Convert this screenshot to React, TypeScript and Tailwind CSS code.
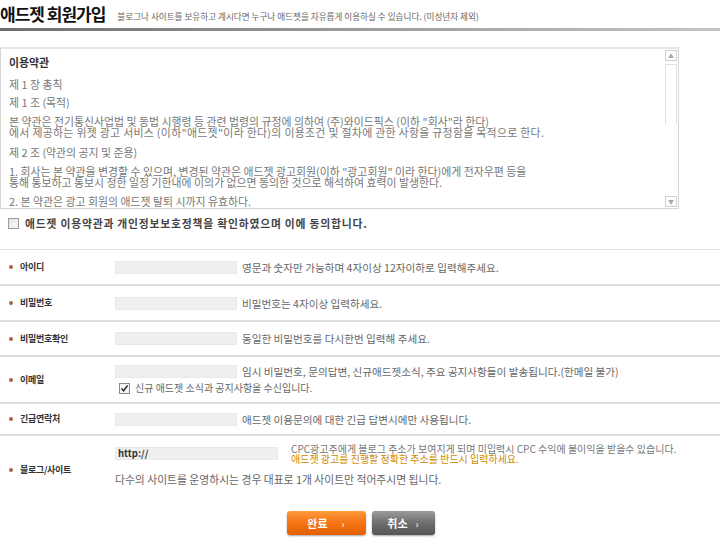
import React from "react";

const Dot = () => <span className="w-[4px] h-[4px] rounded-full bg-[#a8643e] shrink-0" />;

function Row({ label, h, children }: { label: string; h: string; children: React.ReactNode }) {
  return (
    <div className={`flex ${h} border-b-2 border-[#dcdcdc] items-center`}>
      <div className="w-[115px] shrink-0 flex items-center pl-[9px] gap-[7px] self-center">
        <Dot />
        <span className="text-[9px] font-bold text-[#333] tracking-[-0.3px]">{label}</span>
      </div>
      <div className="flex-1">{children}</div>
    </div>
  );
}

const Input = ({ w = "w-[122px]", children }: { w?: string; children?: React.ReactNode }) => (
  <div className={`${w} h-[13px] bg-[#efefef] border border-[#e9e9e9] shrink-0 flex items-center pl-[2px]`}>{children}</div>
);

const Help = ({ children }: { children: React.ReactNode }) => (
  <span className="ml-[5px] text-[10.6px] text-[#666] leading-[13px] whitespace-nowrap">{children}</span>
);

export default function App() {
  return (
    <div className="w-[720px] h-[541px] bg-white overflow-hidden font-['Noto_Sans_CJK_KR',sans-serif] text-[#555]">
      {/* header */}
      <div className="flex items-end h-[28px] pb-[3px]">
        <h1 className="text-[17px] font-bold leading-[22px] tracking-[-1px] text-[#111] whitespace-nowrap">애드젯 회원가입</h1>
        <span className="ml-[12px] mb-[4px] text-[8.6px] text-[#666] leading-[10px] whitespace-nowrap">
          블로그나 사이트를 보유하고 계시다면 누구나 애드젯을 자유롭게 이용하실 수 있습니다. (미성년자 제외)
        </span>
      </div>
      <div className="h-[3px] bg-gradient-to-r from-[#6e6e6e] via-[#9c9c9c] to-[#c4c4c4]" />

      {/* terms box */}
      <div className="mt-[16px] w-[679px] h-[162px] border border-[#d6d6d6] border-t-2 border-t-[#e6e6e6] flex overflow-hidden">
        <div className="flex-1 pl-[8px] pt-[8px] text-[10.9px] leading-[11px] text-[#777] whitespace-nowrap overflow-hidden">
          <p className="font-bold text-[#333] mb-[11px]">이용약관</p>
          <p className="mb-[7px]">제 1 장 총칙</p>
          <p className="mb-[8px]">제 1 조 (목적)</p>
          <p>본 약관은 전기통신사업법 및 동법 시행령 등 관련 법령의 규정에 의하여 (주)와이드픽스 (이하 "회사"라 한다)</p>
          <p className="mb-[9px] tracking-[0.3px]">에서 제공하는 위젯 광고 서비스 (이하"애드젯"이라 한다)의 이용조건 및 절차에 관한 사항을 규정함을 목적으로 한다.</p>
          <p className="mb-[8px]">제 2 조 (약관의 공지 및 준용)</p>
          <p>1. 회사는 본 약관을 변경할 수 있으며, 변경된 약관은 애드젯 광고회원(이하 "광고회원" 이라 한다)에게 전자우편 등을</p>
          <p className="mb-[8px]">통해 통보하고 통보시 정한 일정 기한내에 이의가 없으면 동의한 것으로 해석하여 효력이 발생한다.</p>
          <p>2. 본 약관은 광고 회원의 애드젯 탈퇴 시까지 유효하다.</p>
        </div>
        <div className="w-[13px] shrink-0 flex flex-col pt-[1px] pb-[1px] pr-[1px]">
          <div className="h-[11px] border border-[#cfcfcf] flex items-center justify-center text-[6px] text-[#aaa] leading-none">▲</div>
          <div className="mt-[3px] h-[60px] border border-[#e0e0e0] border-b-0" />
          <div className="flex-1" />
          <div className="h-[11px] border border-[#cfcfcf] flex items-center justify-center text-[6px] text-[#aaa] leading-none">▼</div>
        </div>
      </div>

      {/* agreement */}
      <div className="mt-[8px] flex items-center h-[12px] pl-[8px]">
        <span className="w-[11px] h-[11px] border border-[#9a9a9a] bg-gradient-to-br from-[#e6e6e6] to-[#fafafa] shrink-0" />
        <span className="ml-[6px] text-[10.8px] font-bold text-[#444] tracking-[0.8px] whitespace-nowrap leading-[12px]">
          애드젯 이용약관과 개인정보보호정책을 확인하였으며 이에 동의합니다.
        </span>
      </div>

      {/* form */}
      <div className="mt-[20px] border-t border-[#e4e4e4]">
        <Row label="아이디" h="h-[36px]">
          <div className="flex items-center"><Input /><Help>영문과 숫자만 가능하며 4자이상 12자이하로 입력해주세요.</Help></div>
        </Row>
        <Row label="비밀번호" h="h-[36px]">
          <div className="flex items-center"><Input /><Help>비밀번호는 4자이상 입력하세요.</Help></div>
        </Row>
        <Row label="비밀번호확인" h="h-[35px]">
          <div className="flex items-center"><Input /><Help>동일한 비밀번호를 다시한번 입력해 주세요.</Help></div>
        </Row>
        <Row label="이메일" h="h-[47px]">
          <div className="flex flex-col">
            <div className="flex items-center"><Input /><Help>임시 비밀번호, 문의답변, 신규애드젯소식, 주요 공지사항들이 발송됩니다.(한메일 불가)</Help></div>
            <div className="flex items-center mt-[4px] pl-[4px]">
              <span className="w-[11px] h-[11px] border border-[#8a8a8a] bg-[#f4f4f4] flex items-center justify-center shrink-0">
                <svg width="9" height="9" viewBox="0 0 9 9"><path d="M1.5 4.5 L3.6 6.8 L7.6 1.6" stroke="#333" strokeWidth="1.6" fill="none" /></svg>
              </span>
              <span className="ml-[5px] text-[10px] text-[#666] leading-[12px] whitespace-nowrap">신규 애드젯 소식과 공지사항을 수신입니다.</span>
            </div>
          </div>
        </Row>
        <Row label="긴급연락처" h="h-[32px]">
          <div className="flex items-center"><Input /><Help>애드젯 이용문의에 대한 긴급 답변시에만 사용됩니다.</Help></div>
        </Row>

        {/* blog row */}
        <div className="flex h-[60px] items-center">
          <div className="w-[115px] shrink-0 flex items-center pl-[9px] gap-[7px] mt-[8px]">
            <Dot />
            <span className="text-[9px] font-bold text-[#333] tracking-[-0.3px]">블로그/사이트</span>
          </div>
          <div className="flex flex-col">
            <div className="flex items-start">
              <Input w="w-[163px]">
                <span className="text-[9.5px] font-bold text-[#333] leading-[11px]">http://</span>
              </Input>
              <div className="ml-[13px] -mt-[3px] text-[10px] leading-[10px] whitespace-nowrap">
                <div className="text-[#777]">CPC광고주에게 블로그 주소가 보여지게 되며 미입력시 CPC 수익에 불이익을 받을수 있습니다.</div>
                <div className="text-[#d08a00]">애드젯 광고를 진행할 정확한 주소를 반드시 입력하세요.</div>
              </div>
            </div>
            <div className="mt-[9px] text-[10.8px] text-[#666] leading-[12px] whitespace-nowrap">
              다수의 사이트를 운영하시는 경우 대표로 1개 사이트만 적어주시면 됩니다.
            </div>
          </div>
        </div>
      </div>

      {/* buttons */}
      <div className="mt-[15px] flex justify-center gap-[6px] pl-[1px]">
        <button className="w-[79px] h-[24px] rounded-[3px] bg-gradient-to-b from-[#ff9a3a] via-[#f37414] to-[#e35f00] shadow-[0_1px_2px_rgba(0,0,0,0.35)] flex items-center justify-center text-white text-[11px] font-bold">
          <span>완료</span><span className="ml-[14px] text-[10px] font-normal">›</span>
        </button>
        <button className="w-[63px] h-[24px] rounded-[3px] bg-gradient-to-b from-[#9a9a9a] via-[#6e6e6e] to-[#555] shadow-[0_1px_2px_rgba(0,0,0,0.35)] flex items-center justify-center text-white text-[11px] font-bold">
          <span>취소</span><span className="ml-[8px] text-[10px] font-normal">›</span>
        </button>
      </div>
    </div>
  );
}
